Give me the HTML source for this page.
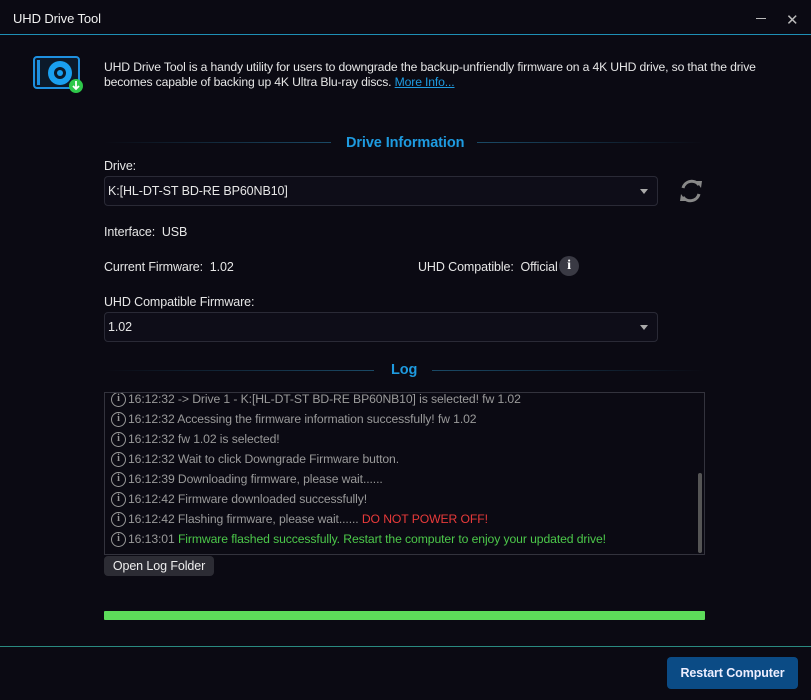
<!DOCTYPE html>
<html><head><meta charset="utf-8"><style>
*{margin:0;padding:0;box-sizing:border-box}
body{width:811px;height:700px;background:#0b0a13;font-family:"Liberation Sans",sans-serif;color:#e6e6e6;position:relative;overflow:hidden;font-size:12.5px;letter-spacing:-0.1px}
.a{position:absolute;white-space:nowrap}
.sel{position:absolute;border:1px solid #2a2a36;border-radius:4px;background:#0e0d18}
.sel span{position:absolute;left:3px;top:7px}
.sel i{position:absolute;right:9px;top:12px;border-left:4px solid transparent;border-right:4px solid transparent;border-top:5px solid #aaa}
.log div{height:20px;display:flex;align-items:center;color:#9a9a9a;font-size:12.2px;padding-left:6px;white-space:pre}
.ic{display:inline-block;flex:none;width:15px;height:15px;border:1.5px solid #999;border-radius:50%;font-size:10px;line-height:12px;text-align:center;font-weight:bold;margin-right:2px;color:#999;font-family:"Liberation Serif",serif}
</style></head><body>
<div class="a" style="left:13px;top:11px;font-size:13px;color:#f0f0f0">UHD Drive Tool</div>
<div class="a" style="left:756px;top:18px;width:10px;height:1px;background:#bbb"></div>
<div class="a" style="left:786px;top:11px;font-size:15px;color:#bbb">✕</div>
<div class="a" style="left:0;top:34px;width:811px;height:1px;background:#1e8fb5"></div>
<svg class="a" style="left:33px;top:56px" width="52" height="38" viewBox="0 0 52 38">
<rect x="1" y="1" width="45" height="31" rx="3" fill="#0c1a2a" stroke="#1e90e0" stroke-width="2"/>
<rect x="4" y="4" width="3" height="25" fill="#1e90e0"/>
<circle cx="27" cy="17" r="12" fill="#1aa0f0"/><circle cx="27" cy="17" r="6" fill="#0c1a2a"/><circle cx="27" cy="17" r="3" fill="#1aa0f0"/>
<circle cx="43" cy="30" r="7" fill="#2ec84a"/><path d="M43 25v8M40 30l3 3 3-3" stroke="#fff" stroke-width="1.8" fill="none"/>
</svg>
<div class="a" style="left:104px;top:60px;line-height:15px;font-size:12.2px;letter-spacing:-0.15px;color:#e6e6e6">UHD Drive Tool is a handy utility for users to downgrade the backup-unfriendly firmware on a 4K UHD drive, so that the drive<br>becomes capable of backing up 4K Ultra Blu-ray discs. <span style="color:#1e9be0;text-decoration:underline">More Info...</span></div>
<div class="a" style="left:104px;top:142px;width:227px;height:1px;background:linear-gradient(90deg,#0b0a13,#1a4a66)"></div>
<div class="a" style="left:477px;top:142px;width:228px;height:1px;background:linear-gradient(90deg,#1a4a66,#0b0a13)"></div>
<div class="a" style="left:346px;top:135px;font-size:14.5px;font-weight:bold;color:#1e9be0">Drive Information</div>
<div class="a" style="left:104px;top:159px">Drive:</div>
<div class="sel" style="left:104px;top:176px;width:554px;height:30px"><span>K:[HL-DT-ST BD-RE BP60NB10]</span><i></i></div>
<svg class="a" style="left:675px;top:176px" width="32" height="30" viewBox="0 0 32 30"><path d="M8 12a9 9 0 0 1 16-3M24 18a9 9 0 0 1-16 3" stroke="#888" stroke-width="3" fill="none"/><path d="M21 5l6 0-1 7z" fill="#888"/><path d="M11 25l-6 0 1-7z" fill="#888"/></svg>
<div class="a" style="left:104px;top:225px">Interface:&nbsp; USB</div>
<div class="a" style="left:104px;top:260px">Current Firmware:&nbsp; 1.02</div>
<div class="a" style="left:418px;top:260px">UHD Compatible:&nbsp; Official</div>
<div class="a" style="left:559px;top:256px;width:20px;height:20px;border-radius:50%;background:#3a3a44;color:#fff;font-weight:bold;text-align:center;line-height:20px;font-family:'Liberation Serif',serif;font-size:14px">i</div>
<div class="a" style="left:104px;top:295px">UHD Compatible Firmware:</div>
<div class="sel" style="left:104px;top:312px;width:554px;height:30px"><span>1.02</span><i></i></div>
<div class="a" style="left:104px;top:370px;width:270px;height:1px;background:linear-gradient(90deg,#0b0a13,#1a4a66)"></div>
<div class="a" style="left:432px;top:370px;width:273px;height:1px;background:linear-gradient(90deg,#1a4a66,#0b0a13)"></div>
<div class="a" style="left:391px;top:362px;font-size:14.5px;font-weight:bold;color:#1e9be0">Log</div>
<div class="a log" style="left:104px;top:392px;width:601px;height:163px;border:1px solid #33333d;overflow:hidden">
<div style="margin-top:-4px"><span class="ic">i</span>16:12:32 -&gt; Drive 1 - K:[HL-DT-ST BD-RE BP60NB10] is selected! fw 1.02</div>
<div><span class="ic">i</span>16:12:32 Accessing the firmware information successfully! fw 1.02</div>
<div><span class="ic">i</span>16:12:32 fw 1.02 is selected!</div>
<div><span class="ic">i</span>16:12:32 Wait to click Downgrade Firmware button.</div>
<div><span class="ic">i</span>16:12:39 Downloading firmware, please wait......</div>
<div><span class="ic">i</span>16:12:42 Firmware downloaded successfully!</div>
<div><span class="ic">i</span>16:12:42 Flashing firmware, please wait...... <span style="color:#e83a3a">DO NOT POWER OFF!</span></div>
<div><span class="ic">i</span>16:13:01 <span style="color:#4cc84a">Firmware flashed successfully. Restart the computer to enjoy your updated drive!</span></div>
<span style="position:absolute;left:593px;top:80px;width:4px;height:80px;background:#555;border-radius:2px"></span>
</div>
<div class="a" style="left:104px;top:556px;width:110px;height:20px;background:#2c2c34;border-radius:4px;text-align:center;line-height:20px;color:#eee">Open Log Folder</div>
<div class="a" style="left:104px;top:611px;width:601px;height:9px;background:#5ddc5a;border-radius:1px"></div>
<div class="a" style="left:0;top:646px;width:811px;height:1px;background:#2a8a80"></div>
<div class="a" style="left:667px;top:657px;width:131px;height:32px;background:#0b4b85;border-radius:4px;text-align:center;line-height:32px;font-weight:bold;color:#eef">Restart Computer</div>
</body></html>
